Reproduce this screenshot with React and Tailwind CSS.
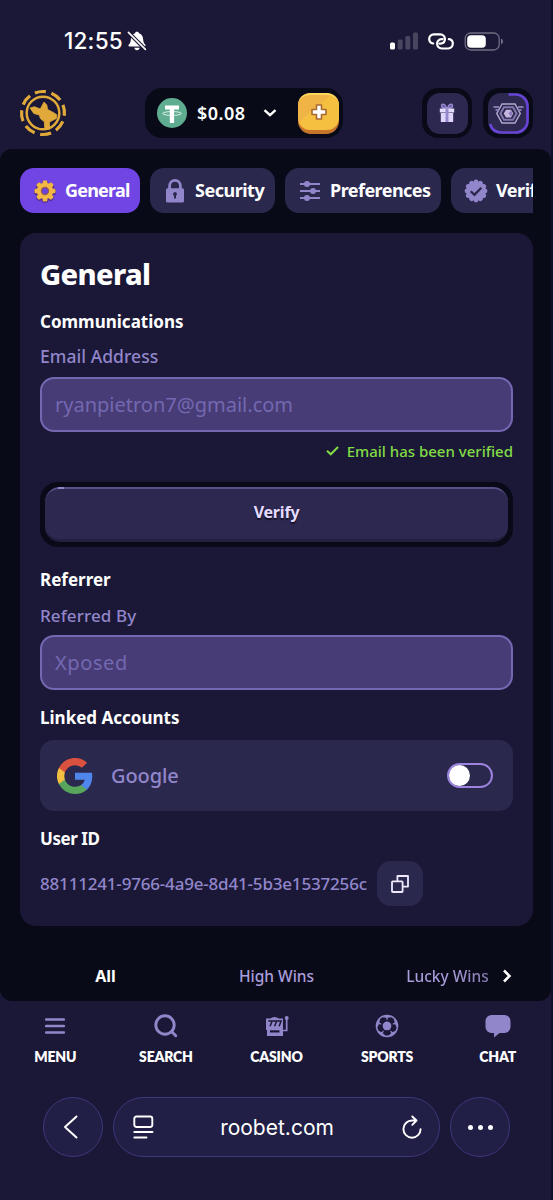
import React from "react";

const LILAC = "#9286cb";

function Logo() {
  return (
    <svg className="h-[50px] w-[50px]" viewBox="0 0 50 50" fill="none">
      <circle cx="25" cy="25" r="21.500" stroke="#e0a93a" strokeWidth="3.200" pathLength="80" strokeDasharray="6.600 3.400" transform="rotate(-112 25 25)" />
      <circle cx="25" cy="25" r="16.300" stroke="#e0a93a" strokeWidth="2.500" />
      <path d="M12 20 16.500 18.700l5.800 2.300 3.700-7 2.800 3 .8 4.500 4 2 5.200 3.200-.5 3.800-6 3-1 1.500.8 6-5.300.7-.4-8-3.900-3-1.300-3.800-5.400-1.400Z" fill="#e0a93a" stroke="#e0a93a" strokeWidth=".8" strokeLinejoin="round" />
    </svg>
  );
}

function Bell() {
  return (
    <svg className="h-5 w-5" viewBox="0 0 20 20">
      <path d="M10 .8c1 0 1.700.5 1.900 1.400 2.700.8 4 3 4.200 5.800.2 3.200.9 4.500 2.200 5.700.6.6.3 1.800-.7 1.800H2.400c-1 0-1.300-1.200-.7-1.800C3 12.500 3.700 11.200 3.900 8c.2-2.800 1.500-5 4.200-5.800C8.300 1.300 9 .8 10 .8ZM7.300 16.700h5.400c-.2 1.500-1.200 2.500-2.700 2.500s-2.500-1-2.700-2.500Z" fill="#fff" />
      <path d="M1.200 1.200 18.600 18.600" stroke="#1a1836" strokeWidth="3.800" />
      <path d="M1.400 1.400 18.400 18.400" stroke="#fff" strokeWidth="1.600" strokeLinecap="round" />
    </svg>
  );
}

function StatusBar() {
  return (
    <div className="flex h-[82px] items-center pl-[64px] pr-[47px]">
      <span className="font-[Inter,sans-serif] text-[22.500px] font-medium tracking-[0.200px] text-white">12:55</span>
      <span className="ml-[4px]"><Bell /></span>
      <svg className="ml-auto h-[18px] w-[28px]" viewBox="0 0 28 18">
        <rect x="0" y="10.500" width="5" height="7" rx="1.500" fill="#fff" />
        <rect x="7.700" y="7.500" width="5" height="10" rx="1.500" fill="#48465f" />
        <rect x="15.300" y="4" width="5" height="13.500" rx="1.500" fill="#48465f" />
        <rect x="23" y="0.500" width="5" height="17" rx="1.500" fill="#48465f" />
      </svg>
      <svg className="ml-[10px] h-[17px] w-[26px]" viewBox="0 0 26 17" fill="none" stroke="#fff" strokeWidth="2.200" strokeLinecap="round">
        <path d="M5.200 10.500C2.700 10.200 1.200 8.400 1.200 6.100c0-2.700 1.900-4.700 4.600-4.700h6.500c2.700 0 4.600 2 4.600 4.700s-1.900 4.500-4.600 4.500h-.9" />
        <path d="M20.800 6.200c2.500.3 4 2.100 4 4.400 0 2.700-1.900 4.900-4.600 4.900h-6.500c-2.700 0-4.600-2.200-4.600-4.900 0-2.500 1.900-4.500 4.600-4.500h.9" />
      </svg>
      <svg className="ml-[10px] h-[19px] w-[40px]" viewBox="0 0 40 19" fill="none">
        <rect x="1.200" y="1" width="34" height="17" rx="5.500" stroke="#6f6d82" strokeWidth="1.300" />
        <rect x="3.200" y="3.200" width="18.600" height="12.600" rx="3.800" fill="#fff" />
        <path d="M37 6.800c1.300.3 2 1.300 2 2.700s-.7 2.400-2 2.700Z" fill="#6f6d82" />
      </svg>
    </div>
  );
}

function Header() {
  return (
    <header className="flex h-[62px] items-center pb-0 pl-[18px] pr-[18px]">
      <Logo />
      <div className="ml-[77px] flex h-[50px] w-[198px] items-center rounded-[17px] bg-[#090a18] pl-[12px] pr-[4px]">
        <svg className="h-[30px] w-[30px]" viewBox="0 0 30 30">
          <circle cx="15" cy="15" r="15" fill="#5fad91" />
          <path d="M8 7.600h14v4h-4.900V25h-4.300V11.600H8Z" fill="#fff" />
          <ellipse cx="15" cy="15.500" rx="9.300" ry="1.900" fill="none" stroke="#fff" strokeWidth=".8" />
        </svg>
        <span className="ml-[10px] w-[60px] text-[18px] font-semibold tracking-[0.450px] text-white">$0.08</span>
        <svg className="ml-[6px] h-[10px] w-[14px]" viewBox="0 0 14 10" fill="none"><path d="m1.500 2.200 5.500 5 5.500-5" stroke="#fff" strokeWidth="2.400" /></svg>
        <div className="ml-auto flex h-[41px] w-[41px] rounded-[13px] bg-[#c8752c] pb-[4px]">
          <div className="flex h-[37px] w-[41px] items-center justify-center rounded-[12px] border-t-[2px] border-[#ffd75e] bg-linear-to-br from-[#efb445] from-40% to-[#f5bf40] to-40%">
            <svg className="h-[18px] w-[18px]" viewBox="0 0 18 18"><path d="M6.500 2h5v4.500H16v5h-4.500V16h-5v-4.500H2v-5h4.500Z" fill="#fff" stroke="#a96a32" strokeWidth="1.600" strokeLinejoin="round" /></svg>
          </div>
        </div>
      </div>
      <div className="ml-auto flex h-[50px] w-[50px] items-center justify-center rounded-[16px] bg-[#090a18]">
        <div className="flex h-[41px] w-[41px] items-center justify-center rounded-[13px] bg-[#2c284f]">
          <svg className="h-[20px] w-[16px]" viewBox="0 0 16 20">
            <path d="M7.500 5C4 5.300 2.300 4.300 2.500 2.500 2.700.6 5.700.3 7.500 5Zm1 0C12 5.300 13.700 4.300 13.500 2.500 13.300.6 10.300.3 8.500 5Z" fill="#5c4f9b" stroke="#9688cd" strokeWidth="1.500" />
            <path d="M.8 5.500h14.400v4H.8Z" fill="#e4dcff" /><path d="M1.800 10h12.400v9H1.800Z" fill="#dfd5fb" />
            <path d="M6.500 5.500h3V19h-3Z" fill="#9688cd" />
          </svg>
        </div>
      </div>
      <div className="ml-[11px] flex h-[50px] w-[50px] items-center justify-center rounded-[16px] bg-[#090a18]">
        <svg className="h-[41px] w-[41px]" viewBox="0 0 41 41" fill="none">
          <rect width="41" height="41" rx="13" fill="#2c284f" />
          <path d="M20.500 1.500h7A12 12 0 0 1 39.500 13.500v14a12 12 0 0 1-12 12h-14C7.600 39.500 3.700 36.500 2 31" stroke="#6744d5" strokeWidth="2.600" />
          <path d="m14 11-5.200 9.500L14 30h13l5.200-9.500L27 11Z" stroke="#b0a6ce" strokeWidth="1.500" />
          <path d="m16 14.300-3.600 6.200 3.600 6.200h9l3.600-6.200-3.600-6.200Z" stroke="#8278ae" strokeWidth="2" />
          <path d="m18 16.700-2.300 3.900 2.300 3.800h5l2.300-3.800-2.300-3.900Z" fill="#c4b8e0" />
          <path d="m20.500 20.600 2.500-3.100 1.700 3.100-1.700 3.100Z" fill="#8d7cbd" />
          <path d="M5.500 14h5.500M7.500 17h3M30 14h5.500M30.500 17h3" stroke="#8278ae" strokeWidth="1.800" />
        </svg>
      </div>
    </header>
  );
}

function Gear() {
  return (
    <svg className="h-[26px] w-[26px]" viewBox="-13 -13 26 26">
      <g fill="#55308f" stroke="#55308f" strokeWidth="2" transform="translate(0 .8)">
        {[0, 45, 90, 135].map((a) => <rect key={a} x="-2.200" y="-10" width="4.400" height="20" rx="1" transform={`rotate(${a})`} />)}
        <circle r="7.800" />
      </g>
      <g fill="#f2b744">
        {[0, 45, 90, 135].map((a) => <rect key={a} x="-2.300" y="-10.500" width="4.600" height="21" rx="1.300" transform={`rotate(${a})`} />)}
        <circle r="8.200" />
      </g>
      <circle r="3.600" fill="#6d42dc" stroke="#9a5b4b" strokeWidth="1.200" />
    </svg>
  );
}

function Lock() {
  return (
    <svg className="h-[24px] w-[20px]" viewBox="0 0 20 24">
      <path d="M4.600 11V6.800a5.400 5.400 0 0 1 10.800 0V11" fill="none" stroke={LILAC} strokeWidth="2.800" />
      <rect x="1" y="9.200" width="18" height="14.300" rx="1.500" fill={LILAC} />
      <path d="M10 13a2 2 0 0 1 1 3.700v2.800H9v-2.800a2 2 0 0 1 1-3.700Z" fill="#2b284e" />
    </svg>
  );
}

function Sliders() {
  return (
    <svg className="h-[20px] w-[20px]" viewBox="0 0 20 20" stroke={LILAC} fill={LILAC}>
      <path d="M0 3h20M0 10h20M0 17h20" strokeWidth="1.900" />
      <g stroke="none"><circle cx="7" cy="3" r="3" /><circle cx="13" cy="10" r="3" /><circle cx="7" cy="17" r="3" /></g>
    </svg>
  );
}

function Badge() {
  return (
    <svg className="h-[24px] w-[24px] shrink-0" viewBox="-12 -12 24 24">
      <circle r="9.800" fill={LILAC} />
      <g fill={LILAC}>
        {[0, 30, 60, 90, 120, 150, 180, 210, 240, 270, 300, 330].map((a) => <circle key={a} cy="-9" r="2.400" transform={`rotate(${a})`} />)}
      </g>
      <path d="m-5.300.2 3.800 3.700L5.300-3.200" fill="none" stroke="#2b284e" strokeWidth="2.300" />
    </svg>
  );
}

const tab = "flex h-[45px] shrink-0 items-center rounded-[14px] bg-[#2b284e] text-[18px] font-bold text-white";

function Tabs() {
  return (
    <nav className="flex gap-[10px] overflow-hidden">
      <div className="flex h-[45px] w-[120px] shrink-0 items-center rounded-[14px] bg-[#7145e4] pl-[12px] text-[18px] font-bold tracking-[-0.800px] text-white"><Gear /><span className="ml-[7px]">General</span></div>
      <div className={tab + " w-[125px] pl-[15px]"}><Lock /><span className="ml-[10px] tracking-[-0.500px]">Security</span></div>
      <div className={tab + " w-[156px] pl-[15px]"}><Sliders /><span className="ml-[10px] tracking-[-0.550px]">Preferences</span></div>
      <div className={tab + " w-[160px] pl-[13px]"}><Badge /><span className="ml-[8px] tracking-[-0.500px]">Verification</span></div>
    </nav>
  );
}

function Google() {
  return (
    <svg className="h-[36px] w-[36px]" viewBox="1 1 22 22">
      <path fill="#4f86ec" d="M22.560 12.250c0-.78-.07-1.530-.2-2.250H12v4.260h5.920c-.26 1.370-1.040 2.530-2.210 3.310v2.770h3.570c2.080-1.920 3.280-4.740 3.280-8.090z" />
      <path fill="#58a55c" d="M12 23c2.970 0 5.460-.98 7.280-2.660l-3.570-2.770c-.98.66-2.230 1.060-3.710 1.060-2.860 0-5.290-1.930-6.160-4.530H2.180v2.840C3.990 20.530 7.700 23 12 23z" />
      <path fill="#f2bf42" d="M5.840 14.090c-.22-.66-.35-1.360-.35-2.090s.13-1.430.35-2.090V7.070H2.180C1.430 8.550 1 10.220 1 12s.43 3.450 1.180 4.930l2.850-2.220.81-.62z" />
      <path fill="#db5140" d="M12 5.380c1.620 0 3.060.56 4.210 1.640l3.150-3.150C17.450 2.090 14.970 1 12 1 7.700 1 3.990 3.470 2.180 7.070l3.660 2.840c.87-2.600 3.300-4.530 6.160-4.530z" />
    </svg>
  );
}

function Heading({ children, className }) {
  return <h2 className={"text-[17px] font-bold leading-[24px] text-white " + className}>{children}</h2>;
}

function Field({ children, className }) {
  return <div className={"flex h-[55px] items-center rounded-[14px] border-2 border-[#7468b2] bg-[#473c75] pl-[13px] text-[20px] text-[#7468b2] " + className}>{children}</div>;
}

function SettingsCard() {
  return (
    <section className="mt-[20px] flex h-[693px] flex-col rounded-[16px] bg-[#1a1836] px-[20px] pt-[20px]">
      <h1 className="text-[29px] font-extrabold leading-[42px] tracking-[-0.650px] text-white">General</h1>
      <Heading className="mt-[15px]">Communications</Heading>
      <div className="mt-[11px] text-[17.500px] font-medium leading-[23px] tracking-[0.050px] text-[#9286cb]">Email Address</div>
      <Field className="mt-[9px]"><span>ryanpietron7@gmail.com</span></Field>
      <div className="mt-[8px] flex h-[24px] items-center justify-end gap-[8px] pb-[2px] text-[15px] font-medium text-[#82dc45]">
        <svg className="h-[10px] w-[13px]" viewBox="0 0 13 10" fill="none"><path d="m1 4.800 3.800 3.500L12 1" stroke="#82dc45" strokeWidth="2.100" /></svg>
        <span>Email has been verified</span>
      </div>
      <button className="mt-[18px] flex h-[65px] rounded-[18px] bg-[#090a18] p-[5px]">
        <span className="relative flex h-[55px] w-full items-center justify-center rounded-[15px] border-b-[3px] border-t-2 border-b-[#23203f] border-t-[#575087] bg-[#2c284f] pb-[5px] text-[16px] font-bold tracking-[-0.200px] text-[#e4dcff] [text-shadow:0_2px_1px_#14122a]">
          <i className="absolute left-[13px] top-[-2px] h-[2px] w-[6px] bg-[#9286cb]" />
          Verify
        </span>
      </button>
      <Heading className="mt-[21px]">Referrer</Heading>
      <div className="mt-[12px] text-[17px] font-medium leading-[24px] tracking-[0.100px] text-[#9286cb]">Referred By</div>
      <Field className="mt-[7px]"><span className="tracking-[0.600px]">Xposed</span></Field>
      <Heading className="mt-[16px]">Linked Accounts</Heading>
      <div className="mt-[10px] flex h-[71px] items-center rounded-[14px] bg-[#2b284e] pl-[17px] pr-[20px]">
        <Google />
        <span className="ml-[18px] text-[20px] font-medium tracking-[-0.100px] text-[#9286cb]">Google</span>
        <div className="ml-auto flex h-[25px] w-[46px] items-center rounded-full border-2 border-[#9b83df]">
          <div className="h-[21px] w-[21px] rounded-full bg-white" />
        </div>
      </div>
      <Heading className="mt-[16px] tracking-[-0.450px]">User ID</Heading>
      <div className="mt-[10px] flex h-[45px] items-center">
        <span className="w-[337px] whitespace-nowrap text-[17px] font-medium tracking-[-0.180px] text-[#9286cb]">88111241-9766-4a9e-8d41-5b3e1537256c</span>
        <div className="flex h-[45px] w-[46px] items-center justify-center rounded-[14px] bg-[#2b284e]">
          <svg className="h-[18px] w-[18px]" viewBox="0 0 18 18" fill="none" stroke="#eee9ff" strokeWidth="1.800" strokeLinejoin="round">
            <rect x="1" y="6.400" width="10.600" height="10.600" rx=".8" />
            <path d="M6.400 6V1H17v10.600h-5" />
          </svg>
        </div>
      </div>
    </section>
  );
}

function WinTabs() {
  return (
    <div className="mt-[38px] flex h-[24px] items-center text-[15.500px] font-medium text-[#aa9ddc]">
      <span className="w-[171px] text-center text-[16px] font-bold text-white">All</span>
      <span className="w-[171px] pt-px text-center">High Wins</span>
      <span className="w-[171px] bg-linear-to-r from-[#aa9ddc] from-50% to-[#5c5480] bg-clip-text pt-px text-center text-transparent">Lucky Wins</span>
    </div>
  );
}

function Ball() {
  return (
    <svg className="h-[24px] w-[24px]" viewBox="-12 -12 24 24">
      <circle r="11.300" fill={LILAC} />
      <circle r="5.200" fill="none" stroke="#1a1836" strokeWidth="1.500" />
      <g fill="#1a1836">
        {[36, 108, 180, 252, 324].map((a) => <path key={a} d="M-3-4.500 3-4.500 4.200-7.300 1.500-9.600H-1.500L-4.200-7.300Z" transform={`rotate(${a})`} />)}
      </g>
      <path d="M0-4 3.800-1.240 2.350 3.240h-4.700L-3.800-1.240Z" fill={LILAC} />
    </svg>
  );
}

function NavItem({ icon, children }) {
  return (
    <div className="flex flex-1 flex-col items-center">
      <div className="flex h-[26px] items-center">{icon}</div>
      <div className="mt-[8px] font-[Lato,sans-serif] text-[14px] font-extrabold leading-[20px] tracking-[-0.200px] text-white">{children}</div>
    </div>
  );
}

function BottomNav() {
  return (
    <nav className="-mr-[2px] flex h-[96px] pt-[12px]">
      <NavItem icon={<svg className="h-[18px] w-[20px]" viewBox="0 0 20 18"><path d="M1 2.500h18M1 9h18M1 15.500h18" stroke={LILAC} strokeWidth="2.300" strokeLinecap="round" /></svg>}>MENU</NavItem>
      <NavItem icon={<svg className="h-[24px] w-[24px]" viewBox="0 0 24 24" fill="none" stroke={LILAC} strokeWidth="2.900" strokeLinecap="round"><circle cx="11" cy="11" r="9.200" /><path d="m17.500 17.500 4.300 4.300" /></svg>}>SEARCH</NavItem>
      <NavItem icon={
        <svg className="h-[22px] w-[25px]" viewBox="0 0 25 22">
          <path d="M2 3.500h4.200a6.600 6.600 0 0 1 8.600 0H19V21H3v-6H2Z" fill={LILAC} />
          <path d="M4.300 6h3.800l-2 5.300M8.800 6h3.800l-2 5.300M13.300 6h3.800l-2 5.300" fill="none" stroke="#1a1836" strokeWidth="1.500" />
          <rect x="6" y="15.300" width="9.500" height="2.200" fill="#1a1836" />
          <path d="M19 15.500h3.700V4" fill="none" stroke={LILAC} strokeWidth="1.700" /><circle cx="22.700" cy="3" r="2" fill={LILAC} />
        </svg>
      }>CASINO</NavItem>
      <NavItem icon={<Ball />}>SPORTS</NavItem>
      <NavItem icon={<svg className="h-[24px] w-[26px]" viewBox="0 0 26 24"><path d="M6.500 1h13a6 6 0 0 1 6 6v6a6 6 0 0 1-6 6h-5L9 23.500V19H6.500a6 6 0 0 1-6-6V7a6 6 0 0 1 6-6Z" fill={LILAC} /></svg>}>CHAT</NavItem>
    </nav>
  );
}

function BrowserBar() {
  return (
    <div className="flex gap-[10px] pl-[43px]">
      <div className="flex h-[60px] w-[60px] items-center justify-center rounded-full border border-[#3d377c] bg-[#211f45]">
        <svg className="mr-[5px] h-[24px] w-[15px]" viewBox="0 0 15 24" fill="none"><path d="M13.500 1.500 2 12l11.500 10.500" stroke="#fff" strokeWidth="2" strokeLinecap="round" strokeLinejoin="round" /></svg>
      </div>
      <div className="flex h-[60px] w-[327px] items-center rounded-full border border-[#3d377c] bg-[#211f45] pl-[19px] pr-[17px]">
        <svg className="h-[24px] w-[21px]" viewBox="0 0 21 24" fill="none" stroke="#fff" strokeWidth="1.900" strokeLinecap="round">
          <rect x="1.300" y="1.500" width="18" height="10.500" rx="2.200" /><path d="M1.300 17H19.500M1.300 22.500H13.500" />
        </svg>
        <span className="flex-1 pr-[2px] pt-[2px] text-center font-[Inter,sans-serif] text-[21px] text-white">roobet.com</span>
        <svg className="h-[24px] w-[20px]" viewBox="0 0 20 24" fill="none" stroke="#fff" strokeWidth="1.900" strokeLinecap="round" strokeLinejoin="round">
          <path d="M14 5.500h-4a8.600 8.600 0 1 0 8.600 8.600M10.300 1.500l4.200 4-4.200 4.300" />
        </svg>
      </div>
      <div className="flex h-[60px] w-[60px] items-center justify-center gap-[5px] rounded-full border border-[#3d377c] bg-[#211f45]">
        <i className="h-[5px] w-[5px] rounded-full bg-white" /><i className="h-[5px] w-[5px] rounded-full bg-white" /><i className="h-[5px] w-[5px] rounded-full bg-white" />
      </div>
    </div>
  );
}

export default function App() {
  return (
    <div className="h-[1200px] w-[553px] overflow-hidden border-r-2 border-[#100f29] bg-[#1a1836] font-['Noto_Sans',sans-serif]">
      <StatusBar />
      <Header />
      <div className="h-[5px]" />
      <main className="relative h-[852px] rounded-[12px] bg-[#090a18] pl-[20px] pr-[18px] pt-[19px]">
        <Tabs />
        <SettingsCard />
        <WinTabs />
        <svg className="absolute right-[39px] top-[820px] h-[14px] w-[10px]" viewBox="0 0 10 14" fill="none"><path d="m2 1.500 5.500 5.500L2 12.500" stroke="#fff" strokeWidth="2.500" /></svg>
      </main>
      <BottomNav />
      <BrowserBar />
    </div>
  );
}
